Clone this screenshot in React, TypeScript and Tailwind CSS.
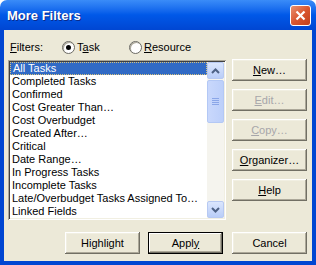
import React from "react";

const items = [
  "All Tasks",
  "Completed Tasks",
  "Confirmed",
  "Cost Greater Than…",
  "Cost Overbudget",
  "Created After…",
  "Critical",
  "Date Range…",
  "In Progress Tasks",
  "Incomplete Tasks",
  "Late/Overbudget Tasks Assigned To…",
  "Linked Fields",
];

function Btn({
  children,
  disabled,
  def,
  className = "",
}: {
  children: React.ReactNode;
  disabled?: boolean;
  def?: boolean;
  className?: string;
}) {
  return (
    <div
      className={
        "w-[75px] h-[22px] flex items-center justify-center bg-[#ece9d8] " +
        (def
          ? "border border-black shadow-[inset_-1px_-1px_#716f64,inset_1px_1px_#fff,inset_-2px_-2px_#aca899] "
          : "shadow-[inset_-1px_-1px_#716f64,inset_1px_1px_#fff,inset_-2px_-2px_#aca899,inset_2px_2px_#f1efe2] ") +
        (disabled ? "text-[#a7a6aa] " : "text-black ") +
        className
      }
    >
      {children}
    </div>
  );
}

function Radio({ checked }: { checked?: boolean }) {
  return (
    <div className="w-[13px] h-[13px] rounded-full bg-white border border-[#6b6a63] shadow-[inset_1px_1px_#aca899] flex items-center justify-center">
      {checked && <div className="w-[5px] h-[5px] rounded-full bg-black" />}
    </div>
  );
}

function Arrow({ up }: { up?: boolean }) {
  return (
    <div className="w-[17px] h-[17px] rounded-[2px] border border-[#b7c9f2] bg-gradient-to-b from-[#dbe6fd] to-[#b9cdf8] flex items-center justify-center">
      <svg width="9" height="6" viewBox="0 0 9 6">
        <path
          d={up ? "M1 5 L4.5 1.5 L8 5" : "M1 1 L4.5 4.5 L8 1"}
          fill="none"
          stroke="#4d6185"
          strokeWidth="2"
        />
      </svg>
    </div>
  );
}

export default function App() {
  return (
    <div
      className="w-[316px] h-[265px] flex flex-col text-[11px] leading-none bg-white"
      style={{ fontFamily: '"Liberation Sans", Arial, sans-serif' }}
    >
      <div className="h-[30px] shrink-0 rounded-t-[7px] bg-gradient-to-b from-[#3a8cf8] via-[#0058e8] to-[#0046d2] flex items-center justify-between pl-[7px] pr-[5px]">
        <span className="text-white font-bold text-[13px] [text-shadow:1px_1px_#0b2a8a]">
          More Filters
        </span>
        <div className="w-[21px] h-[21px] rounded-[3px] border border-white bg-gradient-to-br from-[#e8906f] via-[#d9562f] to-[#c2401c] flex items-center justify-center">
          <svg width="11" height="11" viewBox="0 0 11 11">
            <path d="M1.5 1.5 L9.5 9.5 M9.5 1.5 L1.5 9.5" stroke="#fff" strokeWidth="2.2" />
          </svg>
        </div>
      </div>

      <div className="flex-1 flex flex-col bg-[#ece9d8] border-x-[4px] border-b-[4px] border-[#0046d2]">
        <div className="h-[19px] mt-[8px] flex items-center text-black">
          <span className="ml-[6px] w-[52px]">
            <u>F</u>ilters:
          </span>
          <Radio checked />
          <span className="ml-[2px] w-[52px]">
            T<u>a</u>sk
          </span>
          <Radio />
          <span className="ml-[2px]">
            <u>R</u>esource
          </span>
        </div>

        <div className="flex mt-[3px]">
          <div className="ml-[4px] w-[218px] h-[160px] p-[2px] bg-white shadow-[inset_1px_1px_#aca899,inset_-1px_-1px_#fff,inset_2px_2px_#404040,inset_-2px_-2px_#f1efe2] flex">
            <div className="flex-1 flex flex-col text-black">
              {items.map((it, i) => (
                <div
                  key={it}
                  className={
                    "h-[13px] flex items-center pl-[2px] whitespace-nowrap " +
                    (i === 0
                      ? "bg-[#316ac5] text-white border border-dotted border-[#d8c27c] pl-[1px]"
                      : "")
                  }
                >
                  {it}
                </div>
              ))}
            </div>
            <div className="w-[17px] flex flex-col bg-[#f5f4ee]">
              <Arrow up />
              <div className="w-[17px] h-[43px] mt-[1px] rounded-[2px] border border-[#b3c8f5] bg-gradient-to-r from-[#c9d8fc] to-[#bccffa] flex flex-col items-center justify-center gap-[1px]">
                {[0, 1, 2, 3].map((k) => (
                  <div key={k} className="w-[7px] h-[1px] bg-[#8aa6e8]" />
                ))}
              </div>
              <div className="flex-1" />
              <Arrow />
            </div>
          </div>

          <div className="ml-[6px] flex flex-col gap-[8px] -mt-[1px]">
            <Btn>
              <span>
                <u>N</u>ew…
              </span>
            </Btn>
            <Btn disabled>
              <span>
                <u>E</u>dit…
              </span>
            </Btn>
            <Btn disabled>
              <span>
                <u>C</u>opy…
              </span>
            </Btn>
            <Btn>
              <span>
                <u>O</u>rganizer…
              </span>
            </Btn>
            <Btn>
              <span>
                <u>H</u>elp
              </span>
            </Btn>
          </div>
        </div>

        <div className="flex justify-end mt-[12px] pr-[5px]">
          <Btn>
            <span>
              Hi<u>g</u>hlight
            </span>
          </Btn>
          <Btn def className="ml-[8px]">
            <span>
              Appl<u>y</u>
            </span>
          </Btn>
          <Btn className="ml-[9px]">Cancel</Btn>
        </div>
      </div>
    </div>
  );
}
